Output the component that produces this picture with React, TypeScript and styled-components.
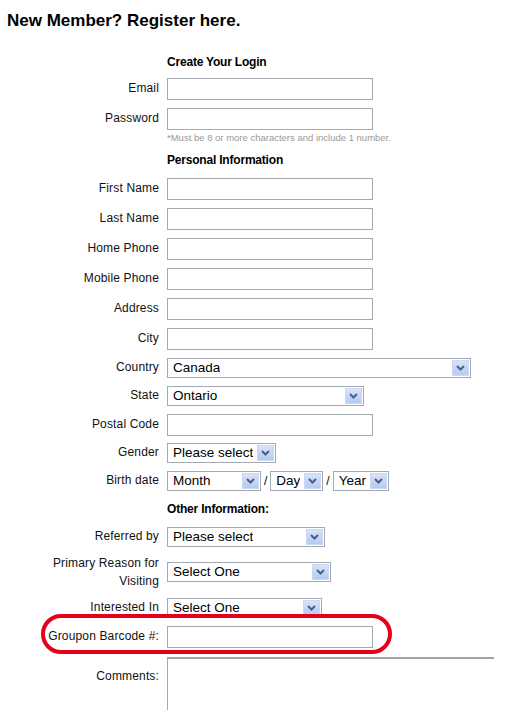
import React from "react";
import styled, { createGlobalStyle } from "styled-components";

const GlobalStyle = createGlobalStyle`
  html, body {
    margin: 0;
    padding: 0;
    background: #ffffff;
  }
  body {
    font-family: "Liberation Sans", Arial, sans-serif;
    color: #000000;
  }
`;

const FieldBorder = "#a3aab3";

const Page = styled.div`
  width: 516px;
  height: 727px;
  overflow: hidden;
  padding-top: 11px;
  box-sizing: border-box;
`;

const Title = styled.h1`
  margin: 0;
  padding-left: 7px;
  font-size: 17px;
  line-height: 20px;
  font-weight: bold;
`;

const Form = styled.div`
  display: flex;
  flex-direction: column;
`;

const SectionTitle = styled.div<{ $top: number }>`
  margin-top: ${(p) => p.$top}px;
  padding-left: 167px;
  font-size: 12px;
  line-height: 16px;
  font-weight: bold;
  letter-spacing: -0.2px;
`;

const Row = styled.div<{ $top: number; $alignTop?: boolean }>`
  position: relative;
  display: grid;
  grid-template-columns: 159px 1fr;
  column-gap: 8px;
  align-items: ${(p) => (p.$alignTop ? "start" : "center")};
  margin-top: ${(p) => p.$top}px;
`;

const Label = styled.label<{ $padTop?: number; $multi?: boolean }>`
  text-align: right;
  font-size: 12px;
  line-height: ${(p) => (p.$multi ? 18 : 16)}px;
  letter-spacing: 0.15px;
  color: #111111;
  padding-top: ${(p) => p.$padTop ?? 0}px;
  padding-bottom: ${(p) => (p.$padTop || p.$multi ? 0 : 2)}px;
`;

const Controls = styled.div`
  display: flex;
  align-items: center;
  gap: 3px;
`;

const TextInput = styled.input`
  box-sizing: border-box;
  width: 206px;
  height: 22px;
  margin: 0;
  padding: 2px 4px;
  border: 1px solid ${FieldBorder};
  background: #ffffff;
  font-family: "Liberation Sans", Arial, sans-serif;
  font-size: 13px;
  outline: none;
`;

const Hint = styled.div`
  margin-top: 2px;
  padding-left: 167px;
  font-size: 9.5px;
  line-height: 12px;
  color: #9a9a9a;
`;

const SelectBox = styled.div<{ $width: number }>`
  box-sizing: border-box;
  width: ${(p) => p.$width}px;
  height: 20px;
  border: 1px solid ${FieldBorder};
  background: #ffffff;
  display: flex;
  align-items: center;
  justify-content: space-between;
  padding: 1px;
`;

const SelectText = styled.span`
  padding-left: 4px;
  font-size: 13.5px;
  line-height: 16px;
  white-space: nowrap;
  overflow: hidden;
`;

const ArrowButton = styled.span`
  box-sizing: border-box;
  flex: none;
  width: 17px;
  height: 16px;
  display: flex;
  align-items: center;
  justify-content: center;
  background: linear-gradient(180deg, #d8e3fa 0%, #c3d3f6 60%, #b8caf3 100%);
  border: 1px solid #cbd8f3;
`;

const Slash = styled.span`
  font-size: 12px;
  line-height: 16px;
  color: #000;
`;

const Comments = styled.textarea`
  box-sizing: border-box;
  width: 327px;
  height: 53px;
  margin: 0;
  padding: 2px;
  resize: none;
  border: none;
  border-top: 2px solid #9aa2ad;
  border-left: 1px solid ${FieldBorder};
  outline: none;
  background: #ffffff;
`;

const Highlight = styled.div`
  position: absolute;
  left: 41px;
  top: -12px;
  width: 351px;
  height: 40px;
  box-sizing: border-box;
  border: 4px solid #e5001a;
  border-radius: 20px;
  pointer-events: none;
`;

const Chevron: React.FC = () => (
  <svg width="9" height="6" viewBox="0 0 9 6">
    <path d="M1 1 L4.5 4.5 L8 1" fill="none" stroke="#4a5f85" strokeWidth="2" />
  </svg>
);

const Select: React.FC<{ value: string; width: number }> = ({ value, width }) => (
  <SelectBox $width={width}>
    <SelectText>{value}</SelectText>
    <ArrowButton>
      <Chevron />
    </ArrowButton>
  </SelectBox>
);

const TextRow: React.FC<{ label: string; top: number }> = ({ label, top }) => (
  <Row $top={top}>
    <Label>{label}</Label>
    <Controls>
      <TextInput type="text" />
    </Controls>
  </Row>
);

const SelectRow: React.FC<{ label: string; top: number; value: string; width: number }> = ({
  label,
  top,
  value,
  width,
}) => (
  <Row $top={top}>
    <Label>{label}</Label>
    <Controls>
      <Select value={value} width={width} />
    </Controls>
  </Row>
);

const App: React.FC = () => {
  return (
    <Page>
      <GlobalStyle />
      <Title>New Member? Register here.</Title>
      <Form>
        <SectionTitle $top={23}>Create Your Login</SectionTitle>
        <TextRow label="Email" top={8} />
        <Row $top={8}>
          <Label>Password</Label>
          <Controls>
            <TextInput type="password" />
          </Controls>
        </Row>
        <Hint>*Must be 8 or more characters and include 1 number.</Hint>

        <SectionTitle $top={8}>Personal Information</SectionTitle>
        <TextRow label="First Name" top={10} />
        <TextRow label="Last Name" top={8} />
        <TextRow label="Home Phone" top={8} />
        <TextRow label="Mobile Phone" top={8} />
        <TextRow label="Address" top={8} />
        <TextRow label="City" top={8} />
        <SelectRow label="Country" top={8} value="Canada" width={304} />
        <SelectRow label="State" top={8} value="Ontario" width={197} />
        <TextRow label="Postal Code" top={8} />
        <SelectRow label="Gender" top={7} value="Please select" width={109} />
        <Row $top={8}>
          <Label>Birth date</Label>
          <Controls>
            <Select value="Month" width={94} />
            <Slash>/</Slash>
            <Select value="Day" width={53} />
            <Slash>/</Slash>
            <Select value="Year" width={56} />
          </Controls>
        </Row>

        <SectionTitle $top={10}>Other Information:</SectionTitle>
        <SelectRow label="Referred by" top={10} value="Please select" width={158} />
        <Row $top={7}>
          <Label $multi>
            Primary Reason for
            <br />
            Visiting
          </Label>
          <Controls>
            <Select value="Select One" width={164} />
          </Controls>
        </Row>
        <SelectRow label="Interested In" top={8} value="Select One" width={155} />
        <Row $top={8}>
          <Highlight />
          <Label>Groupon Barcode #:</Label>
          <Controls>
            <TextInput type="text" />
          </Controls>
        </Row>
        <Row $top={9} $alignTop>
          <Label $padTop={11}>Comments:</Label>
          <Controls>
            <Comments />
          </Controls>
        </Row>
      </Form>
    </Page>
  );
};

export default App;
